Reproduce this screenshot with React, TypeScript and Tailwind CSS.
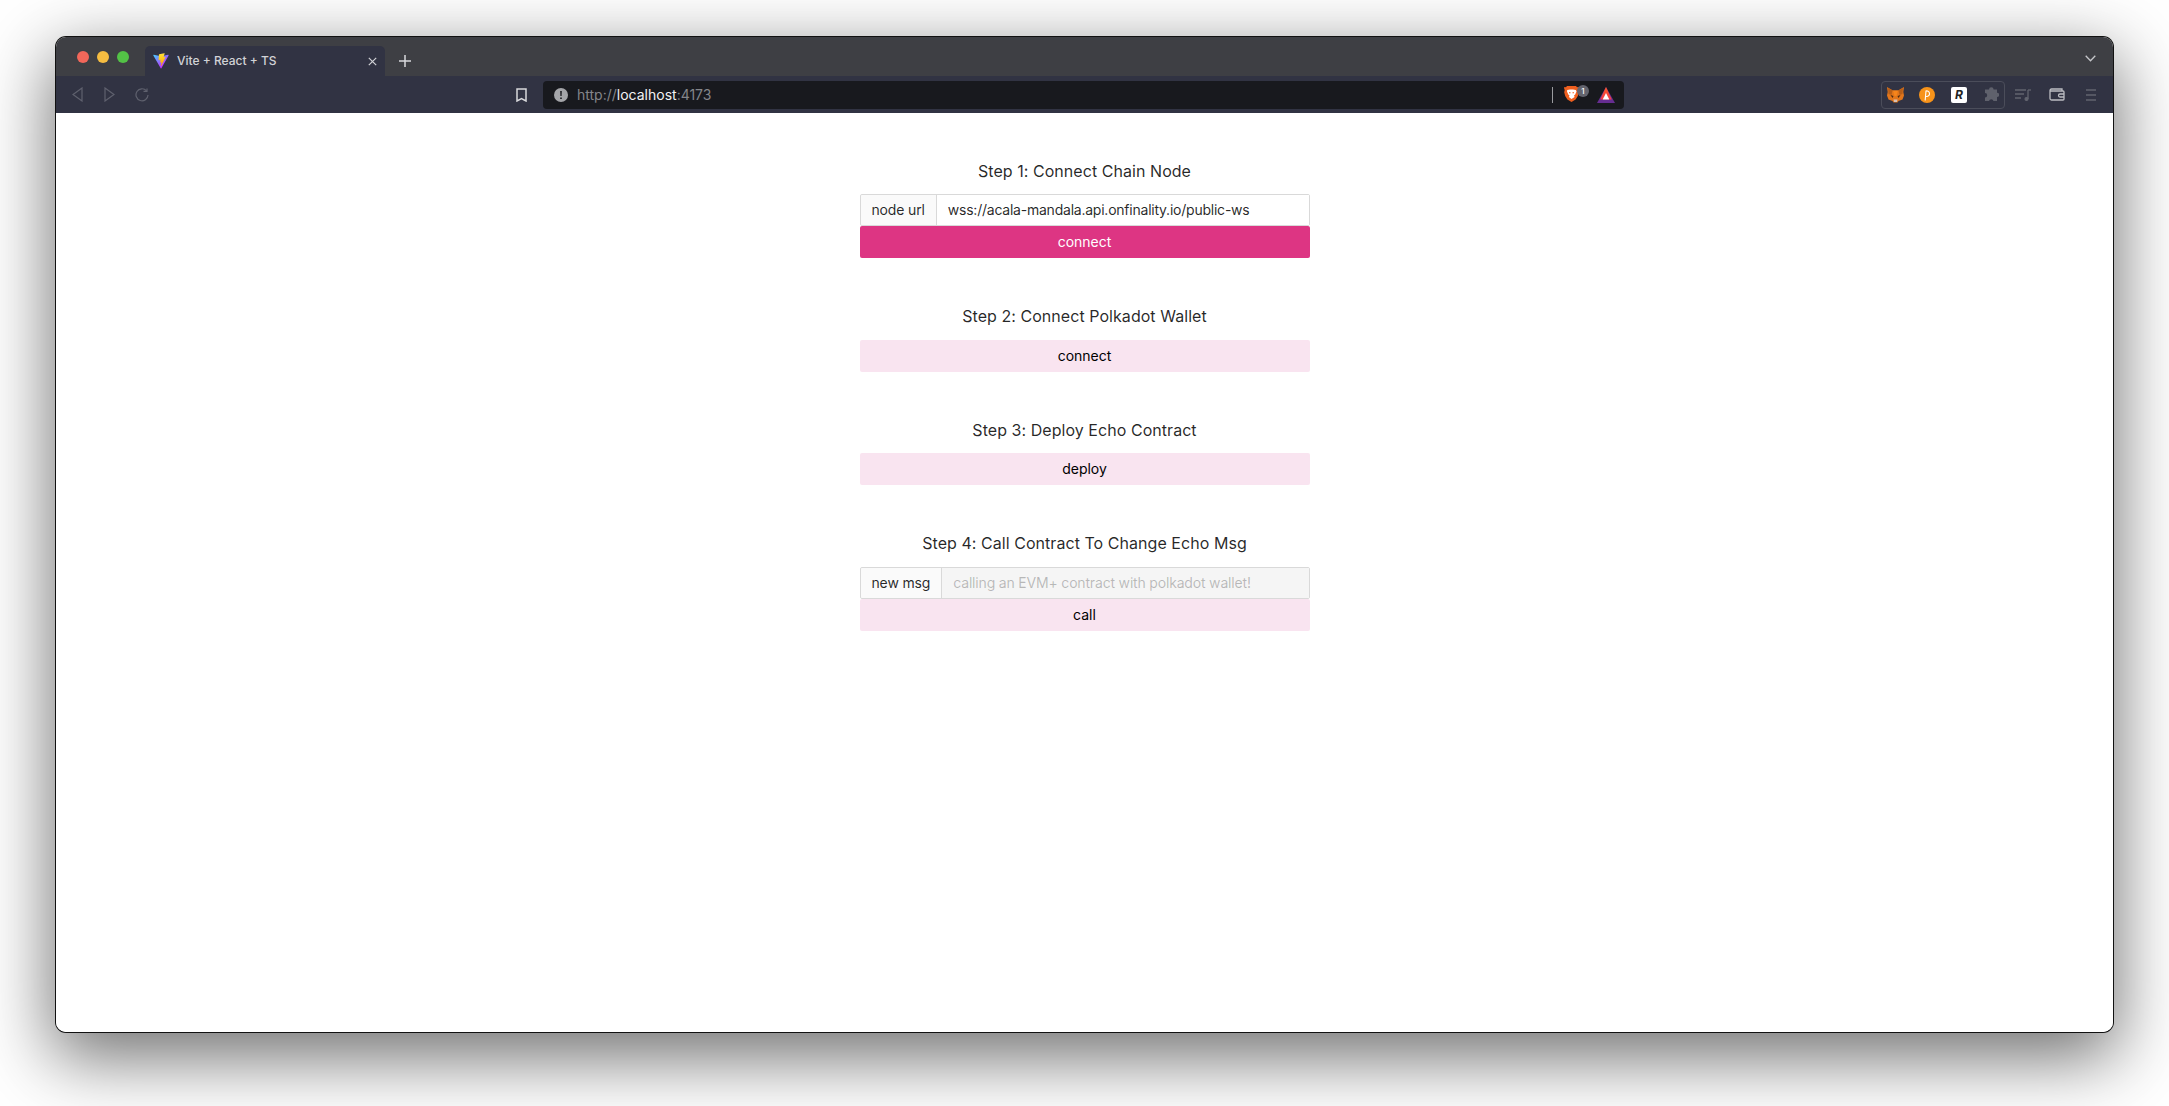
import React from "react";

const FONT = "font-['Inter','Liberation_Sans',sans-serif]";

function ViteIcon() {
  return (
    <svg width="16" height="16" viewBox="0 0 410 404">
      <defs>
        <linearGradient id="va" x1="6" y1="33" x2="235" y2="344" gradientUnits="userSpaceOnUse">
          <stop stopColor="#41D1FF" />
          <stop offset="1" stopColor="#BD34FE" />
        </linearGradient>
        <linearGradient id="vb" x1="194" y1="8" x2="236" y2="292" gradientUnits="userSpaceOnUse">
          <stop stopColor="#FFEA83" />
          <stop offset="0.08" stopColor="#FFDD35" />
          <stop offset="1" stopColor="#FFA800" />
        </linearGradient>
      </defs>
      <path d="M399.6 59.5 215 389.7c-3.8 6.8-13.6 6.8-17.5.1L9.2 59.5c-4.2-7.4 2.1-16.3 10.5-14.8l184.8 33c1.2.2 2.4.2 3.5 0l180.9-33c8.3-1.5 14.8 7.3 10.6 14.8Z" fill="url(#va)" />
      <path d="M292.9 1.6 156.2 28.4c-2.2.4-3.9 2.3-4 4.6l-8.4 142.2c-.2 3.3 2.9 5.9 6.1 5.2l38-8.8c3.6-.8 6.8 2.3 6.1 5.9l-11.3 55.3c-.8 3.7 2.7 6.9 6.3 5.8l23.5-7.1c3.6-1.1 7.1 2.1 6.3 5.8l-17.9 86.8c-1.1 5.4 6.1 8.4 9.1 3.7l2-3.1 111.2-222c1.9-3.7-1.3-8-5.4-7.2l-39.1 7.5c-3.7.7-6.8-2.7-5.8-6.3l25.5-88.5c1-3.7-2.2-7.1-5.9-6.4Z" fill="url(#vb)" />
    </svg>
  );
}

function BraveIcon() {
  return (
    <svg width="15" height="17" viewBox="0 0 15 17">
      <path d="M3 0h9l1 1.2 1.6-.2.4 1-.7 2 .5 2.3-1 3.8-2.2 3.4L7.5 16 3.4 13.5 1.2 10.100.2 6.300.7 4 0 2l.4-1L2 1.200Z" fill="#ee5f1f" />
      <path d="M3.200 4 6 3.400h3L11.800 4l.7 1.500-1.300 3-1.200 1 .6 1.600L7.500 13l-2.600-1.900.6-1.600-1.200-1-1.300-3Z" fill="#fff" />
      <path d="M5 6.200h1.500v1H5Zm3.500 0H10v1H8.500Z" fill="#ee5f1f" />
    </svg>
  );
}

function BatIcon() {
  return (
    <svg width="18" height="16" viewBox="0 0 18 16">
      <defs>
        <linearGradient id="bat" x1="0" y1="0" x2="0" y2="1">
          <stop stopColor="#ff5a1f" />
          <stop offset="1" stopColor="#ee3a4a" />
        </linearGradient>
      </defs>
      <path d="M9 0 18 16H0Z" fill="#662d91" />
      <path d="M9 0 14.800 12.500H3.200Z" fill="url(#bat)" />
      <path d="M9 6 12.300 12.500H5.700Z" fill="#fff" />
    </svg>
  );
}

function FoxIcon() {
  return (
    <svg width="17" height="16" viewBox="0 0 17 16">
      <path d="M0 0 6 3.500h5L17 0l-.7 5 .7 3.500-1.500 4-4 1.500-1 1.500h-4l-1-1.500-4-1.500L0 8.500.7 5Z" fill="#e2761b" />
      <path d="M1 1 5.500 3.500 4.500 8 1.500 7ZM16 1l-4.500 2.500 1 4.500 3-1Z" fill="#b85f18" />
      <path d="M3.500 8 6.500 9 5.500 11ZM13.500 8l-3 1 1 2Z" fill="#4a2c14" />
      <path d="M6.500 12.500h4L10 15H7Z" fill="#d7c1b3" />
      <path d="M6 3.500h5L9.500 9h-2Z" fill="#f6851b" />
    </svg>
  );
}

function PolkaIcon() {
  return (
    <svg width="16" height="16" viewBox="0 0 16 16">
      <circle cx="8" cy="8" r="8" fill="#f7931a" />
      <path d="M6.200 13 7 4a2.800 2.800 0 1 1 .5 5.500" fill="none" stroke="#fff" strokeWidth="1.100" strokeLinecap="round" />
    </svg>
  );
}

function Top() {
  return (
    <>
      <div className="flex h-[39px] items-stretch rounded-t-[10px] bg-[#3e3f44] pl-[21px] pr-[17px]">
        <div className="mt-[14px] flex h-3 gap-2">
          <span className="h-3 w-3 rounded-full bg-[#f2675a]" />
          <span className="h-3 w-3 rounded-full bg-[#f6bd41]" />
          <span className="h-3 w-3 rounded-full bg-[#53c246]" />
        </div>
        <div className="ml-[16px] mt-[9px] flex w-[240px] items-center rounded-t-[5px] bg-[#313343] pl-[8px] pr-[8px]">
          <ViteIcon />
          <span className="ml-[8px] flex-1 text-[12px] font-medium text-[#d1d2d6]">Vite + React + TS</span>
          <svg width="9" height="9" viewBox="0 0 9 9" stroke="#d1d2d6" strokeWidth="1.200">
            <path d="M.8.8l7.400 7.400M8.200.8.8 8.200" />
          </svg>
        </div>
        <div className="ml-[14px] mt-[9px] flex h-[30px] items-center">
          <svg width="12" height="12" viewBox="0 0 12 12" stroke="#d8d9dc" strokeWidth="1.500">
            <path d="M6 0v12M0 6h12" />
          </svg>
        </div>
        <div className="ml-auto flex items-center pt-[3px]">
          <svg width="11" height="7" viewBox="0 0 11 7" fill="none" stroke="#c5c6ca" strokeWidth="1.300">
            <path d="M.7.8 5.500 5.800 10.300.8" />
          </svg>
        </div>
      </div>
      <div className="flex h-[37px] items-center bg-[#313343] pl-[16px] pr-[17px]">
        <svg width="11" height="15" viewBox="0 0 11 15" fill="none" stroke="#5f616e" strokeWidth="1.200">
          <path d="M10 1v13L1 7.500Z" />
        </svg>
        <svg width="11" height="15" viewBox="0 0 11 15" fill="none" stroke="#5f616e" strokeWidth="1.200" className="ml-[21px]">
          <path d="M1 1v13l9-6.500Z" />
        </svg>
        <svg width="14" height="14" viewBox="0 0 14 14" fill="none" stroke="#5f616e" strokeWidth="1.200" className="ml-[20px]">
          <path d="M11.500 2.800A6 6 0 1 0 13 7" />
          <path d="M8.500 3.300h3.500V.5" />
        </svg>
        <svg width="11" height="14" viewBox="0 0 11 14" fill="none" stroke="#d8d9dc" strokeWidth="1.500" className="ml-[367px]">
          <path d="M1 1h9v12l-4.500-2.500L1 13Z" />
        </svg>
        <div className="ml-[16px] flex h-[28px] w-[1081px] items-center rounded-[4px] bg-[#18191e] pl-[11px]">
          <svg width="14" height="14" viewBox="0 0 14 14">
            <circle cx="7" cy="7" r="7" fill="#a4a5a9" />
            <path d="M6.200 3h1.600l-.2 5H6.400ZM6.200 9.400h1.600V11H6.200Z" fill="#18191e" />
          </svg>
          <span className="ml-[9px] text-[14px] text-[#84858a]">
            http://<span className="text-[#f2f2f3]">localhost</span>:4173
          </span>
          <span className="ml-auto h-[16px] w-px bg-[#9a9b9f]" />
          <div className="relative ml-[11px]">
            <BraveIcon />
            <span className="absolute -right-[10px] -top-[1px] flex h-[12px] w-[12px] items-center justify-center rounded-full bg-[#63646e] text-[8px] font-medium text-white">1</span>
          </div>
          <div className="ml-[18px] mr-[9px] flex">
            <BatIcon />
          </div>
        </div>
        <div className="ml-auto flex h-[28px] w-[124px] items-center rounded-[4px] border border-[#4b4d5a] pl-[5px]">
          <FoxIcon />
          <span className="ml-[15px] flex">
            <PolkaIcon />
          </span>
          <span className="ml-[16px] flex h-[16px] w-[16px] items-center justify-center rounded-[2px] bg-white text-[12px] font-bold italic leading-none text-[#222]">R</span>
          <svg width="15" height="15" viewBox="0 0 15 15" fill="#5f616c" className="ml-[17px]">
            <path d="M5 2.500a2.300 2.300 0 0 1 4.600 0H13v3.200a2.200 2.200 0 0 1 0 4.400V14H9.500a2.300 2.300 0 0 0-4.500 0H1v-3.500a2.200 2.200 0 0 0 0-4.400V2.500Z" />
          </svg>
        </div>
        <svg width="16" height="12" viewBox="0 0 16 12" fill="none" stroke="#62646f" strokeWidth="1.300" className="ml-[10px]">
          <path d="M0 1h11M0 5h9M0 9h6" />
          <path d="M13 1v9" />
          <circle cx="11.500" cy="10" r="1.400" fill="#62646f" />
          <path d="M13 1h3" />
        </svg>
        <svg width="16" height="13" viewBox="0 0 16 13" fill="none" stroke="#bcbdc2" strokeWidth="1.300" className="ml-[18px]">
          <path d="M13 3V1H2.500A1.500 1.500 0 0 0 1 2.500V10.500A1.500 1.500 0 0 0 2.500 12H14a1 1 0 0 0 1-1V4a1 1 0 0 0-1-1H1.500" />
          <path d="M15 6h-4a1.500 1.500 0 0 0 0 3h4" />
        </svg>
        <svg width="10" height="12" viewBox="0 0 10 12" stroke="#62646f" strokeWidth="1.300" className="ml-[21px]">
          <path d="M0 1h10M0 6h10M0 11h10" />
        </svg>
      </div>
    </>
  );
}

function Addon({ label }: { label: string }) {
  return (
    <span className="flex h-full items-center rounded-l-[2px] border-r border-[#d9d9d9] bg-[#fafafa] px-[11px] pb-[1px] text-[14px] tracking-[-0.15px] text-black/85">
      {label}
    </span>
  );
}

function Field({ label, value, disabled }: { label: string; value: string; disabled?: boolean }) {
  return (
    <div className="flex h-[32px] items-center rounded-[2px] border border-[#d9d9d9]">
      <Addon label={label} />
      <span
        className={
          disabled
            ? "flex h-full flex-1 items-center bg-[#f5f5f5] px-[11px] pb-[1px] text-[14px] tracking-[-0.18px] text-black/25"
            : "flex h-full flex-1 items-center bg-white px-[11px] pb-[1px] text-[14px] tracking-[-0.23px] text-black/85"
        }
      >
        {value}
      </span>
    </div>
  );
}

function Btn({ label, active }: { label: string; active?: boolean }) {
  return (
    <button
      className={
        active
          ? "flex h-[32px] w-full items-center justify-center rounded-[2px] bg-[#dd3583] pb-[1px] text-[14px] text-white"
          : "flex h-[32px] w-full items-center justify-center rounded-[2px] bg-[#f9e4f0] pb-[1px] text-[14px] text-black"
      }
    >
      {label}
    </button>
  );
}

function Step({ title, children, className }: { title: string; children: React.ReactNode; className: string }) {
  return (
    <section className={className}>
      <h2 className="h-[24px] text-center text-[16px] leading-[24px] tracking-[0.05px] text-black/85">{title}</h2>
      {children}
    </section>
  );
}

export default function App() {
  return (
    <div className={`${FONT} h-[1106px] overflow-hidden bg-white pl-[56px] pr-[56px] pt-[37px]`}>
      <div className="flex h-[995px] flex-col rounded-[10px] bg-white shadow-[0_0_0_1px_#111,0_22px_70px_4px_rgba(0,0,0,0.56)]">
        <Top />
        <main className="flex-1 rounded-b-[10px] bg-white pt-[46px]">
          <div className="mx-auto w-[450px]">
            <Step title="Step 1: Connect Chain Node" className="">
              <div className="pt-[11px]">
                <Field label="node url" value="wss://acala-mandala.api.onfinality.io/public-ws" />
              </div>
              <Btn label="connect" active />
            </Step>
            <Step title="Step 2: Connect Polkadot Wallet" className="mt-[46px]">
              <div className="pt-[12px]">
                <Btn label="connect" />
              </div>
            </Step>
            <Step title="Step 3: Deploy Echo Contract" className="mt-[46px]">
              <div className="pt-[11px]">
                <Btn label="deploy" />
              </div>
            </Step>
            <Step title="Step 4: Call Contract To Change Echo Msg" className="mt-[46px]">
              <div className="pt-[12px]">
                <Field label="new msg" value="calling an EVM+ contract with polkadot wallet!" disabled />
              </div>
              <Btn label="call" />
            </Step>
          </div>
        </main>
      </div>
    </div>
  );
}
